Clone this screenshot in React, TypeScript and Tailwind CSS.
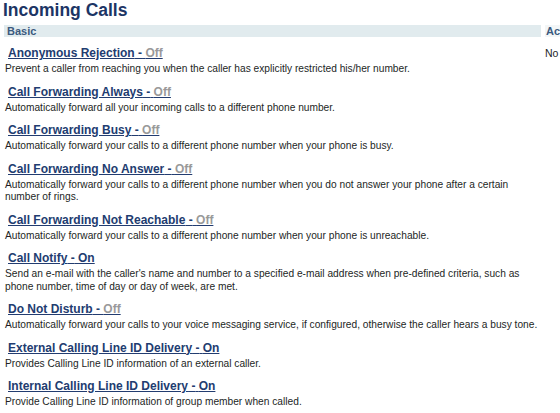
import React from "react";

type Service = {
  name: string;
  on: boolean;
  desc: string[];
};

const SERVICES: Service[] = [
  {
    name: "Anonymous Rejection",
    on: false,
    desc: ["Prevent a caller from reaching you when the caller has explicitly restricted his/her number."],
  },
  {
    name: "Call Forwarding Always",
    on: false,
    desc: ["Automatically forward all your incoming calls to a different phone number."],
  },
  {
    name: "Call Forwarding Busy",
    on: false,
    desc: ["Automatically forward your calls to a different phone number when your phone is busy."],
  },
  {
    name: "Call Forwarding No Answer",
    on: false,
    desc: [
      "Automatically forward your calls to a different phone number when you do not answer your phone after a certain",
      "number of rings.",
    ],
  },
  {
    name: "Call Forwarding Not Reachable",
    on: false,
    desc: ["Automatically forward your calls to a different phone number when your phone is unreachable."],
  },
  {
    name: "Call Notify",
    on: true,
    desc: [
      "Send an e-mail with the caller's name and number to a specified e-mail address when pre-defined criteria, such as",
      "phone number, time of day or day of week, are met.",
    ],
  },
  {
    name: "Do Not Disturb",
    on: false,
    desc: ["Automatically forward your calls to your voice messaging service, if configured, otherwise the caller hears a busy tone."],
  },
  {
    name: "External Calling Line ID Delivery",
    on: true,
    desc: ["Provides Calling Line ID information of an external caller."],
  },
  {
    name: "Internal Calling Line ID Delivery",
    on: true,
    desc: ["Provide Calling Line ID information of group member when called."],
  },
];

function ServiceRow({ s }: { s: Service }) {
  return (
    <div className="pt-[6px]">
      <div className="pl-[4px] text-[12px] leading-[20px] font-bold">
        <a href="#" className="text-[#223c70] underline underline-offset-[1px]">
          {s.name} -{" "}
          <span className={s.on ? "text-[#223c70]" : "text-[#999999]"}>{s.on ? "On" : "Off"}</span>
        </a>
      </div>
      <div className="pl-[1px] text-[10.2px] leading-[12.5px] text-[#231f25]">
        {s.desc.map((line, i) => (
          <div key={i} className="whitespace-nowrap">
            {line}
          </div>
        ))}
      </div>
    </div>
  );
}

export default function App() {
  return (
    <div className="w-[560px] h-[413px] overflow-hidden bg-white font-['Liberation_Sans',Arial,sans-serif]">
      <h1 className="pl-[3px] text-[17.5px] leading-[21px] font-bold text-[#1c3565]">Incoming Calls</h1>
      <div className="flex mt-[4px] gap-[4px] pl-[4px]">
        <div className="w-[537px] shrink-0">
          <div className="bg-[#e1ebee] h-[12px] pl-[3px] text-[11px] leading-[12px] font-bold text-[#3b5a7e]">Basic</div>
          <div>
            {SERVICES.map((s) => (
              <ServiceRow key={s.name} s={s} />
            ))}
          </div>
        </div>
        <div className="w-[100px] shrink-0">
          <div className="bg-[#f3f6f7] h-[12px] pl-[1px] text-[11px] leading-[12px] font-bold text-[#3b5a7e] whitespace-nowrap">
            Active
          </div>
          <div className="pt-[7px] text-[10.5px] leading-[18px] text-[#231f25]">No</div>
        </div>
      </div>
    </div>
  );
}
